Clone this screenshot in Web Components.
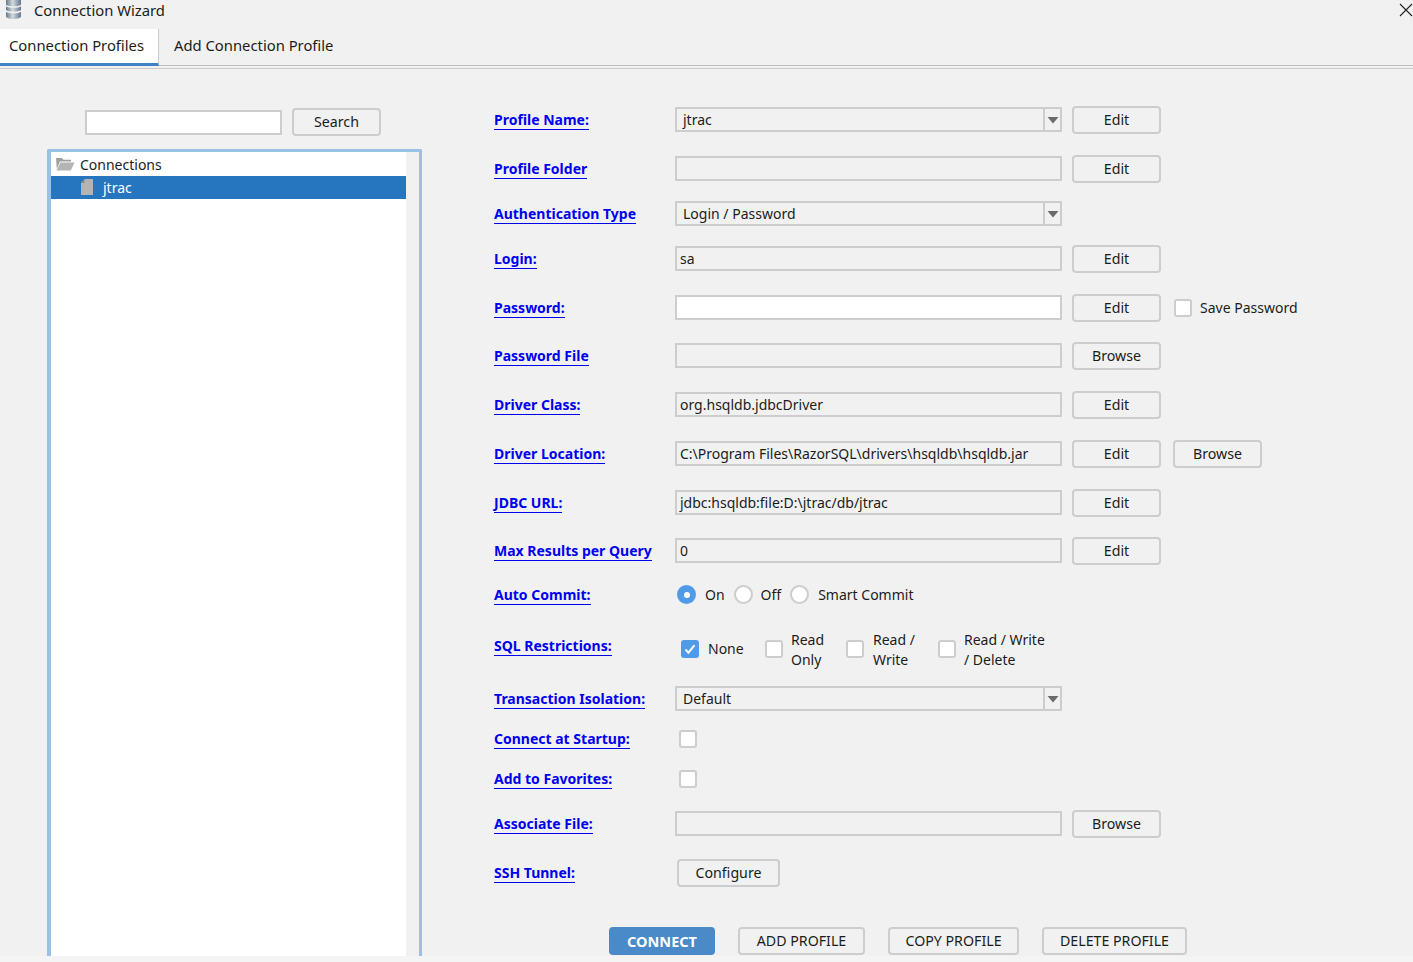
<!DOCTYPE html>
<html><head><meta charset="utf-8">
<style>
html,body{margin:0;padding:0;background:#f4f4f4;height:962px;overflow:hidden}
body{font:14px "Noto Sans",sans-serif;color:#111}
</style></head><body>
<wizard-app>
  <title-bar slot="title">Connection Wizard</title-bar>
  <tab-bar slot="tabs"><tab-item active>Connection Profiles</tab-item><tab-item>Add Connection Profile</tab-item></tab-bar>
  <tree-panel slot="left"></tree-panel>
  <profile-form slot="right">
    <form-row gap="0" label="Profile Name:"><combo-box>jtrac</combo-box><ui-btn>Edit</ui-btn></form-row>
    <form-row gap="24" label="Profile Folder"><text-field></text-field><ui-btn>Edit</ui-btn></form-row>
    <form-row gap="20" label="Authentication Type"><combo-box>Login / Password</combo-box></form-row>
    <form-row gap="20" label="Login:"><text-field>sa</text-field><ui-btn>Edit</ui-btn></form-row>
    <form-row gap="24" label="Password:"><text-field white></text-field><ui-btn>Edit</ui-btn><check-mark style="margin-left:13px"></check-mark><opt-text style="margin-left:8px">Save Password</opt-text></form-row>
    <form-row gap="23" label="Password File"><text-field></text-field><ui-btn>Browse</ui-btn></form-row>
    <form-row gap="24" label="Driver Class:"><text-field>org.hsqldb.jdbcDriver</text-field><ui-btn>Edit</ui-btn></form-row>
    <form-row gap="24" label="Driver Location:"><text-field>C:\Program Files\RazorSQL\drivers\hsqldb\hsqldb.jar</text-field><ui-btn>Edit</ui-btn><ui-btn style="margin-left:12px">Browse</ui-btn></form-row>
    <form-row gap="24" label="JDBC URL:"><text-field>jdbc:hsqldb:file:D:\jtrac/db/jtrac</text-field><ui-btn>Edit</ui-btn></form-row>
    <form-row gap="23" label="Max Results per Query"><text-field>0</text-field><ui-btn>Edit</ui-btn></form-row>
    <form-row gap="19" label="Auto Commit:">
      <radio-mark checked style="margin-left:2px"></radio-mark><opt-text style="margin-left:9px">On</opt-text>
      <radio-mark style="margin-left:9px"></radio-mark><opt-text style="margin-left:8px">Off</opt-text>
      <radio-mark style="margin-left:9px"></radio-mark><opt-text style="margin-left:9px">Smart Commit</opt-text>
    </form-row>
    <form-row gap="21" tall label="SQL Restrictions:">
      <check-mark checked style="margin-left:6px"></check-mark><opt-text style="margin-left:9px;width:57px">None</opt-text>
      <check-mark></check-mark><opt-text style="margin-left:8px;margin-top:2px;width:55px">Read Only</opt-text>
      <check-mark></check-mark><opt-text style="margin-left:9px;margin-top:2px;width:65px">Read / Write</opt-text>
      <check-mark></check-mark><opt-text style="margin-left:8px;margin-top:2px;width:88px">Read / Write / Delete</opt-text>
    </form-row>
    <form-row gap="16" label="Transaction Isolation:"><combo-box>Default</combo-box></form-row>
    <form-row gap="15" label="Connect at Startup:"><check-mark style="margin-left:4px"></check-mark></form-row>
    <form-row gap="15" label="Add to Favorites:"><check-mark style="margin-left:4px"></check-mark></form-row>
    <form-row gap="20" label="Associate File:"><text-field></text-field><ui-btn>Browse</ui-btn></form-row>
    <form-row gap="24" label="SSH Tunnel:"><ui-btn style="margin-left:2px;width:103px">Configure</ui-btn></form-row>
    <action-bar>
      <ui-btn primary style="width:106px">CONNECT</ui-btn>
      <ui-btn style="width:127px">ADD PROFILE</ui-btn>
      <ui-btn style="width:131px">COPY PROFILE</ui-btn>
      <ui-btn style="width:145px">DELETE PROFILE</ui-btn>
    </action-bar>
  </profile-form>
</wizard-app>
<script>
function def(name, css, html, init){
  customElements.define(name, class extends HTMLElement{
    connectedCallback(){
      if(this.shadowRoot) return;
      const r=this.attachShadow({mode:'open'});
      r.innerHTML='<style>'+css+'</style>'+(typeof html==='function'?html(this):html);
      if(init) init(this,r);
    }
  });
}
const esc=s=>String(s).replace(/&/g,'&amp;').replace(/</g,'&lt;');

def('wizard-app',
 `:host{display:flex;flex-direction:column;height:956px;background:#f1f1f1;overflow:hidden}
  .main{display:flex;flex:1;min-height:0}`,
 `<slot name="title"></slot><slot name="tabs"></slot><div class="main"><slot name="left"></slot><slot name="right"></slot></div>`);

def('title-bar',
 `:host{display:flex;align-items:center;height:22px;position:relative;font-size:14.8px;padding-left:5px}
  svg{width:17px;height:20px;margin-top:-3px;flex:none}
  .t{margin-left:12px;margin-top:-2px;color:#1c1c1c}
  .x{position:absolute;left:1399px;top:3px;width:14px;height:14px}`,
 `<svg viewBox="0 0 17 20"><defs><linearGradient id="g" x1="0" x2="1" y1="0" y2="0"><stop offset="0" stop-color="#66798a"/><stop offset=".45" stop-color="#d3dae0"/><stop offset="1" stop-color="#64748a"/></linearGradient></defs>
 <path d="M1 0h15v4.400c0 1-3.400 1.800-7.500 1.800S1 5.400 1 4.400z" fill="url(#g)"/>
 <path d="M1 6.500c1.500 1 4.500 1.300 7.500 1.300s6-.3 7.500-1.300v3.300c0 1-3.400 1.800-7.500 1.800S1 10.800 1 9.800z" fill="url(#g)"/>
 <path d="M1 12c1.500 1 4.500 1.300 7.500 1.300S14.500 13 16 12v4.500c0 1.300-3.400 2.500-7.500 2.500S1 17.800 1 16.500z" fill="url(#g)"/></svg>
 <span class="t"><slot></slot></span>
 <svg class="x" viewBox="0 0 14 14" style="margin:0"><path d="M1 1l12 12M13 1L1 13" stroke="#222" stroke-width="1.100" fill="none"/></svg>`);

def('tab-bar',
 `:host{display:flex;height:44px;border-bottom:1px solid #bdbdbd;position:relative;box-sizing:border-box}
  :host::after{content:"";position:absolute;left:0;right:0;top:46px;height:1px;background:#c9c9c9}`,
 `<slot></slot>`);

def('tab-item',
 `:host{display:flex;align-items:center;padding:0 15px;height:43px;box-sizing:border-box;font-size:14.8px;color:#1c1c1c;margin-top:1px}
  :host([active]){background:#fff;border-bottom:3px solid #3f82c4;border-right:1px solid #c9c9c9;width:159px;padding:0 0 2px 9px;margin-top:7px;height:37px}`,
 `<slot></slot>`);

def('tree-panel',
 `:host{display:flex;flex-direction:column;width:494px;flex:none;box-sizing:border-box;padding-top:42px}
  .search{display:flex;align-items:center;margin-left:85px;gap:10px;height:28px}
  .in{width:197px;height:25px;box-sizing:border-box;border:2px solid #cdcdcd;background:#fff}
  .tree{margin:13px 0 0 47px;width:375px;flex:1;box-sizing:border-box;border:solid #99c1e6;border-width:3px 3px 0 4px;border-top-left-radius:2px;border-top-right-radius:2px;background:#f1f1f1}
  .in2{width:355px;height:100%;background:#fff;box-sizing:border-box;padding-top:1px}
  .n{display:flex;align-items:center;height:23px;font-size:14px;color:#1c1c1c;padding-bottom:1px;box-sizing:border-box}
  .n svg{flex:none}
  .sel{background:#2675bf;color:#fff;padding-left:29px}
  .root{padding-left:4px}`,
 `<div class="search"><div class="in"></div><ui-btn>Search</ui-btn></div>
 <div class="tree"><div class="in2">
  <div class="n root"><svg width="20" height="16" viewBox="0 0 20 16" style="margin-right:5px"><path d="M1 2h6l1.500 1.700H16v1.800H5L1.800 13z" fill="#a0a0a0"/><path d="M5.500 6.500H19.500L15.800 14.500H1.500z" fill="#b4b4b4"/></svg>Connections</div>
  <div class="n sel"><svg width="14" height="18" viewBox="0 0 14 18" style="margin-right:9px"><path d="M5 1h8v16H1V5z" fill="#b4b4b4"/><path d="M4.500 1v4h-3.500z" fill="#8c8c8c"/></svg>jtrac</div>
 </div></div>`);

def('profile-form',
 `:host{display:flex;flex-direction:column;flex:1;min-width:0;padding-top:41px;box-sizing:border-box}`,
 `<slot></slot>`);

def('form-row',
 `:host{display:flex;align-items:center;height:25px}
  :host([tall]){height:42px}
  .lab{width:181px;flex:none;align-self:center;display:flex}
  a{font-weight:700;font-size:14px;color:#0000f0;text-decoration:none;border-bottom:1.500px solid #0000f0;line-height:19px}
  :host([tall]) .lab{transform:translateY(-3px)}
  .c{display:flex;align-items:center}`,
 h=>`<div class="lab"><a href="#">${esc(h.getAttribute('label'))}</a></div><div class="c"><slot></slot></div>`,
 h=>{h.style.marginTop=(h.getAttribute('gap')||0)+'px'});

const fieldCss=`:host{display:flex;align-items:center;width:387px;height:25px;box-sizing:border-box;border:2px solid #cdcdcd;background:#f1f1f1;font-size:14px;color:#1c1c1c;flex:none;margin-right:10px;padding-bottom:1px}`;
def('text-field', fieldCss+`:host{padding-left:3px;white-space:nowrap}:host([white]){background:#fff}`, `<slot></slot>`);
def('combo-box', fieldCss+`:host{padding-left:6px;position:relative}
  .b{position:absolute;right:0;top:0;bottom:0;width:15px;border-left:2px solid #cdcdcd;display:flex;align-items:center;justify-content:flex-end}
  svg{display:block;margin-right:1px}`,
 `<slot></slot><div class="b"><svg width="12" height="8" viewBox="0 0 12 8"><path d="M.5 1h11L6 7.500z" fill="#6b6b6b"/></svg></div>`);

def('ui-btn',
 `:host{display:inline-flex;align-items:center;justify-content:center;width:89px;height:28px;box-sizing:border-box;border:2px solid #cdcdcd;border-radius:4px;background:#f1f1f1;font-size:14.2px;color:#1c1c1c;flex:none;white-space:nowrap;padding-bottom:1px}
  :host([primary]){background:#4a8ac9;border-color:#4a8ac9;color:#fff;font-weight:700;font-size:14.5px}`,
 `<slot></slot>`);

def('check-mark',
 `:host{display:inline-flex;width:18px;height:18px;box-sizing:border-box;border:2px solid #cdcdcd;border-radius:3px;background:#fff;flex:none;align-items:center;justify-content:center}
  :host([checked]){background:#4f9be8;border-color:#4f9be8}
  svg{display:none}:host([checked]) svg{display:block}`,
 `<svg width="14" height="14" viewBox="0 0 14 14"><path d="M2.500 7.500l3 3.200 6-7.500" stroke="#fff" stroke-width="2" fill="none"/></svg>`);

def('radio-mark',
 `:host{display:inline-flex;width:19px;height:19px;box-sizing:border-box;border:2px solid #cdcdcd;border-radius:50%;background:#fff;flex:none;align-items:center;justify-content:center}
  :host([checked]){background:#4f9be8;border-color:#4f9be8}
  i{display:none;width:6px;height:6px;border-radius:50%;background:#fff}:host([checked]) i{display:block}`,
 `<i></i>`);

def('opt-text',`:host{display:inline-block;font-size:14px;line-height:20px;color:#1c1c1c;flex:none}`,`<slot></slot>`);

def('action-bar',
 `:host{display:flex;gap:23px;margin-top:42px;margin-left:115px}`,
 `<slot></slot>`);
</script>
</body></html>
